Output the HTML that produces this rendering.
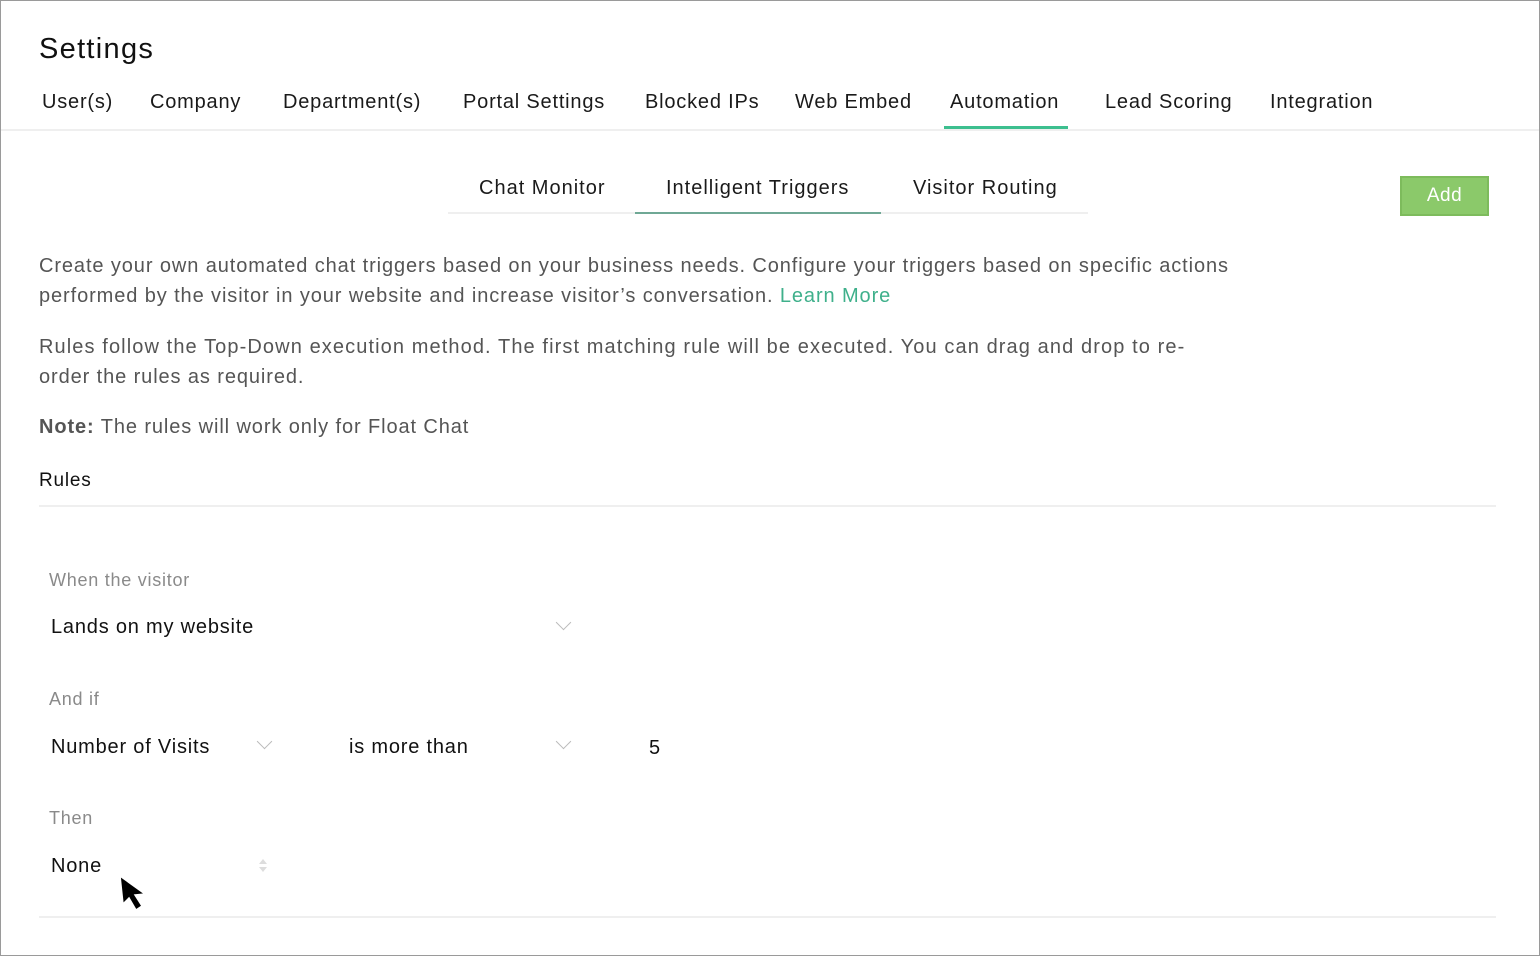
<!DOCTYPE html>
<html><head><meta charset="utf-8"><style>
*{margin:0;padding:0;box-sizing:border-box}
body{width:1540px;height:956px;background:#fff;font-family:"Liberation Sans",sans-serif;position:relative;overflow:hidden;color:#111}
.frame{position:absolute;left:0;top:0;width:1540px;height:956px;border:1px solid #9a9a9a}
.a{position:absolute;white-space:nowrap;line-height:20px}
.nav{font-size:20px;top:92px;color:#1a1a1a;letter-spacing:0.8px}
.sub{font-size:20px;top:178px;color:#1a1a1a;letter-spacing:1px}
.p{font-size:20px;color:#555;left:39px;letter-spacing:0.9px}
.lbl{font-size:18px;color:#8a8a8a;left:49px;letter-spacing:0.75px}
.val{font-size:20px;color:#111;letter-spacing:0.8px}
.chev{position:absolute;width:11px;height:11px;border-right:1.5px solid #bbb;border-bottom:1.5px solid #bbb;transform:rotate(45deg)}
</style></head><body>
<div class="frame"></div>
<div class="a" style="left:39px;top:34px;font-size:29px;line-height:30px;color:#111;letter-spacing:1.3px">Settings</div>
<div class="a nav" style="left:42px">User(s)</div>
<div class="a nav" style="left:150px">Company</div>
<div class="a nav" style="left:283px">Department(s)</div>
<div class="a nav" style="left:463px">Portal Settings</div>
<div class="a nav" style="left:645px">Blocked IPs</div>
<div class="a nav" style="left:795px">Web Embed</div>
<div class="a nav" style="left:950px">Automation</div>
<div class="a nav" style="left:1105px">Lead Scoring</div>
<div class="a nav" style="left:1270px">Integration</div>
<div style="position:absolute;left:1px;right:1px;top:129px;height:2px;background:#efefef"></div>
<div style="position:absolute;left:944px;width:124px;top:126px;height:3px;background:#3dbf8f"></div>

<div class="a sub" style="left:479px">Chat Monitor</div>
<div class="a sub" style="left:666px">Intelligent Triggers</div>
<div class="a sub" style="left:913px">Visitor Routing</div>
<div style="position:absolute;left:448px;width:640px;top:212px;height:2px;background:#efefef"></div>
<div style="position:absolute;left:635px;width:246px;top:212px;height:2px;background:#6fa895"></div>

<div style="position:absolute;left:1400px;top:176px;width:89px;height:40px;background:#8bc96a;border:2px solid #7dbb5c;color:#fff;font-size:19px;text-align:center;line-height:36px;letter-spacing:0.5px">Add</div>

<div class="a p" style="top:256px">Create your own automated chat triggers based on your business needs. Configure your triggers based on specific actions</div>
<div class="a p" style="top:286px">performed by the visitor in your website and increase visitor’s conversation. <span style="color:#3fb08b">Learn More</span></div>
<div class="a p" style="top:337px;letter-spacing:1.1px">Rules follow the Top-Down execution method. The first matching rule will be executed. You can drag and drop to re-</div>
<div class="a p" style="top:367px">order the rules as required.</div>
<div class="a p" style="top:417px"><b>Note:</b> The rules will work only for Float Chat</div>
<div class="a" style="left:39px;top:471px;font-size:19px;color:#111;letter-spacing:0.8px">Rules</div>
<div style="position:absolute;left:39px;width:1457px;top:505px;height:2px;background:#efefef"></div>

<div class="a lbl" style="top:570px">When the visitor</div>
<div class="a val" style="left:51px;top:617px">Lands on my website</div>
<div class="chev" style="left:558px;top:617px"></div>
<div class="a lbl" style="top:689px">And if</div>
<div class="a val" style="left:51px;top:737px">Number of Visits</div>
<div class="chev" style="left:259px;top:736px"></div>
<div class="a val" style="left:349px;top:737px">is more than</div>
<div class="chev" style="left:558px;top:736px"></div>
<div class="a val" style="left:649px;top:738px">5</div>
<div class="a lbl" style="top:808px">Then</div>
<div class="a val" style="left:51px;top:856px">None</div>
<div style="position:absolute;left:259px;top:859px;width:0;height:0;border-left:4px solid transparent;border-right:4px solid transparent;border-bottom:5px solid #ddd"></div>
<div style="position:absolute;left:259px;top:867px;width:0;height:0;border-left:4px solid transparent;border-right:4px solid transparent;border-top:5px solid #ddd"></div>
<svg style="position:absolute;left:117px;top:874px" width="36" height="40" viewBox="0 0 36 40"><path d="M3 2 L6 30 L12 24 L19 36 L25 32 L18 21 L28 20 Z" fill="#000" stroke="#fff" stroke-width="1.5"/></svg>
<div style="position:absolute;left:39px;width:1457px;top:916px;height:2px;background:#efefef"></div>
</body></html>
